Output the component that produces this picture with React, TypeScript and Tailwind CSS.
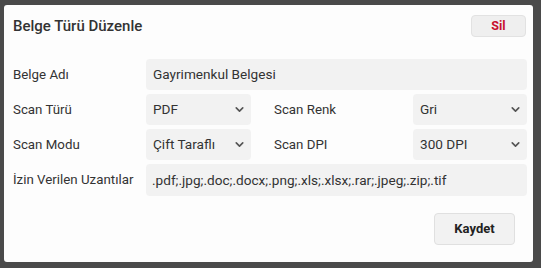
import { ChevronDown } from "lucide-react";

function Select({ value, width }: { value: string; width: string }) {
  return (
    <div
      className={`flex items-center justify-between h-[31px] ${width} bg-[#f2f2f2] rounded-sm pl-[7px] pr-[5px] text-[13.6px] text-[#333]`}
    >
      <span>{value}</span>
      <ChevronDown size={13} strokeWidth={3} className="text-[#555]" />
    </div>
  );
}

export default function App() {
  return (
    <div className="w-[541px] h-[268px] bg-[#4a4a4a] pt-[5px] pl-[4px] font-['Roboto',sans-serif]">
      <div className="w-[529px] h-[257px] bg-[#fdfdfd] rounded-[3px] px-[8px] pt-[8px]">
        <div className="flex items-center justify-between h-[26px]">
          <h2 className="text-[15px] font-medium text-[#333] pl-[1px]">Belge Türü Düzenle</h2>
          <button className="w-[55px] h-[22px] -mr-[1px] bg-[#efefef] border border-[#e2e2e2] rounded-sm text-[12.5px] font-bold text-[#c8102e]">
            Sil
          </button>
        </div>
        <div className="mt-[20px] grid grid-cols-[134px_105px_23px_139px_114px] gap-y-[4px] items-center text-[13.3px] text-[#333]">
          <span className="pl-[1px]">Belge Adı</span>
          <div className="col-span-4 h-[31px] bg-[#f2f2f2] rounded-sm flex items-center pl-[7px] text-[13.6px]">
            Gayrimenkul Belgesi
          </div>

          <span className="pl-[1px]">Scan Türü</span>
          <Select value="PDF" width="w-[105px]" />
          <span />
          <span>Scan Renk</span>
          <Select value="Gri" width="w-[114px]" />

          <span className="pl-[1px]">Scan Modu</span>
          <Select value="Çift Taraflı" width="w-[105px]" />
          <span />
          <span>Scan DPI</span>
          <Select value="300 DPI" width="w-[114px]" />

          <span className="pl-[1px]">İzin Verilen Uzantılar</span>
          <div className="col-span-4 h-[32px] bg-[#f2f2f2] rounded-sm flex items-center pl-[6px] text-[13.6px]">
            .pdf;.jpg;.doc;.docx;.png;.xls;.xlsx;.rar;.jpeg;.zip;.tif
          </div>
        </div>
        <div className="flex justify-end mt-[17px] pr-[10px]">
          <button className="w-[81px] h-[32px] bg-[#f2f2f2] border border-[#e0e0e0] rounded-sm text-[13px] font-bold text-[#222]">
            Kaydet
          </button>
        </div>
      </div>
    </div>
  );
}
